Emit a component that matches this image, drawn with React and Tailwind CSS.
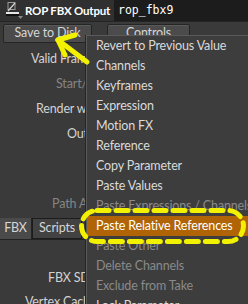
import React from 'react';

// Parameter rows shown on the left side of the pane (menu covers their tails)
const topRows = [
  { label: 'Valid Frame Range', pad: 'pl-[31px]' },
  { label: 'Start/End/Inc', pad: 'pl-[56px]', dim: true },
  { label: 'Render with Take', pad: 'pl-[36px]' },
  { label: 'Output File', pad: 'pl-[67px]' },
];

const menuItems = [
  { label: 'Revert to Previous Value' },
  { label: 'Channels' },
  { label: 'Keyframes' },
  { label: 'Expression' },
  { label: 'Motion FX' },
  { label: 'Reference' },
  { label: 'Copy Parameter' },
  { label: 'Paste Values' },
  { label: 'Paste Expressions / Channels', dim: true },
  { label: 'Paste Relative References', active: true },
  { label: 'Paste Other', dim: true },
  { label: 'Delete Channels', dim: true },
  { label: 'Exclude from Take', dim: true },
  { label: 'Lock Parameter' },
];

const NodeIcon = () => (
  <svg width="22" height="20" viewBox="0 0 22 20">
    <rect x="6" y="1.5" width="7" height="7" fill="none" stroke="#9a9a9a" strokeWidth="1" />
    <path d="M6 10 L13 2" stroke="#cfcfcf" strokeWidth="1.3" />
    <rect x="4" y="11" width="13" height="2" fill="#e6e6e6" />
    <rect x="4" y="13" width="13" height="2" fill="#111" />
    <path d="M16 15 L21 15 L18.5 18 Z" fill="#8a8a8a" />
  </svg>
);

// label column is clipped where the popup menu starts
const ParamRow = ({ label, dim, pad, h = 'h-[25px]' }) => (
  <div className={`flex ${h} items-center`}>
    <div className={`w-[86px] overflow-hidden whitespace-nowrap ${pad} ${dim ? 'text-[#858585]' : 'text-[#d2d2d2]'}`}>
      {label}
    </div>
  </div>
);

const ContextMenu = () => (
  <div className="absolute left-[86px] top-[35px] w-[200px] bg-[#3d3d3d] border-l border-t border-[#5a5a5a] shadow-[-1px_0_0_#262626]">
    {menuItems.map((item) => (
      <div
        key={item.label}
        className={`flex h-[20px] items-center pl-[9px] whitespace-nowrap ${
          item.active
            ? 'bg-[#b06405] text-white'
            : item.dim
            ? 'text-[#8a8a8a]'
            : 'text-[#dadada]'
        }`}
      >
        {item.label}
      </div>
    ))}
  </div>
);

// Yellow annotation drawn over the screenshot
const Annotations = () => (
  <svg className="absolute left-0 top-0 pointer-events-none" width="248" height="304" viewBox="0 0 248 304">
    <g stroke="#f2f200" strokeWidth="5" strokeLinecap="round" strokeLinejoin="round" fill="none">
      <path d="M87 62 L58 40" />
      <path d="M58 40 L75 35" />
      <path d="M58 40 L65 55" />
    </g>
    <rect
      x="81.5"
      y="210.5"
      width="162"
      height="31"
      rx="15.5"
      fill="none"
      stroke="#f2f200"
      strokeWidth="5"
      strokeDasharray="12 7"
      strokeLinecap="round"
    />
  </svg>
);

export default function App() {
  return (
    <div className="relative w-[248px] h-[304px] overflow-hidden bg-[#3a3a3a] text-[12.5px] tracking-[-0.15px] leading-none font-['Lato',sans-serif]">
      {/* Header */}
      <div className="flex h-[22px] items-center bg-[#303030] border-b border-[#242424]">
        <div className="ml-[2px] w-[22px] shrink-0">
          <NodeIcon />
        </div>
        <div className="ml-[1px] shrink-0 whitespace-nowrap font-bold text-white text-[11.5px] tracking-[-0.2px]">ROP FBX Output</div>
        <div className="ml-auto flex h-full w-[134px] shrink-0 items-center bg-[#1c1c1c] pl-[4px] text-white font-['DejaVu_Sans_Mono',monospace] text-[11.5px] tracking-normal">
          rop_fbx9
        </div>
      </div>

      {/* Buttons */}
      <div className="flex gap-[15px] pl-[3px] pt-[2px]">
        <button className="h-[19px] w-[89px] rounded-[2px] border border-[#252525] bg-[#4b4b4b] text-[#d6d6d6] shadow-[inset_0_1px_0_#5a5a5a]">
          Save to Disk
        </button>
        <button className="h-[19px] w-[83px] rounded-[2px] border border-[#252525] bg-[#4b4b4b] text-[#d6d6d6] shadow-[inset_0_1px_0_#5a5a5a]">
          Controls
        </button>
      </div>

      {/* Parameters */}
      <div className="pt-[4px]">
        {topRows.map((r) => (
          <ParamRow key={r.label} {...r} />
        ))}
        <div className="h-[45px]" />
        <ParamRow label="Path Attribute" pad="pl-[52px]" dim h="h-[24px]" />

        {/* Tabs */}
        <div className="mt-[2px] flex h-[22px] border-b border-[#222]">
          <div className="flex w-[32px] items-center justify-center bg-[#4a4a4a] text-[#d6d6d6] border-r border-[#222]">FBX</div>
          <div className="flex w-[50px] items-center justify-center bg-[#424242] text-[#d6d6d6] border border-[#1c1c1c]">Scripts</div>
        </div>

        <div className="pt-[26px]">
          <ParamRow label="FBX SDK Version" pad="pl-[48px]" h="h-[24px]" />
          <ParamRow label="Vertex Cache Format" pad="pl-[25px]" h="h-[24px]" />
        </div>
      </div>

      <ContextMenu />
      <Annotations />
    </div>
  );
}
